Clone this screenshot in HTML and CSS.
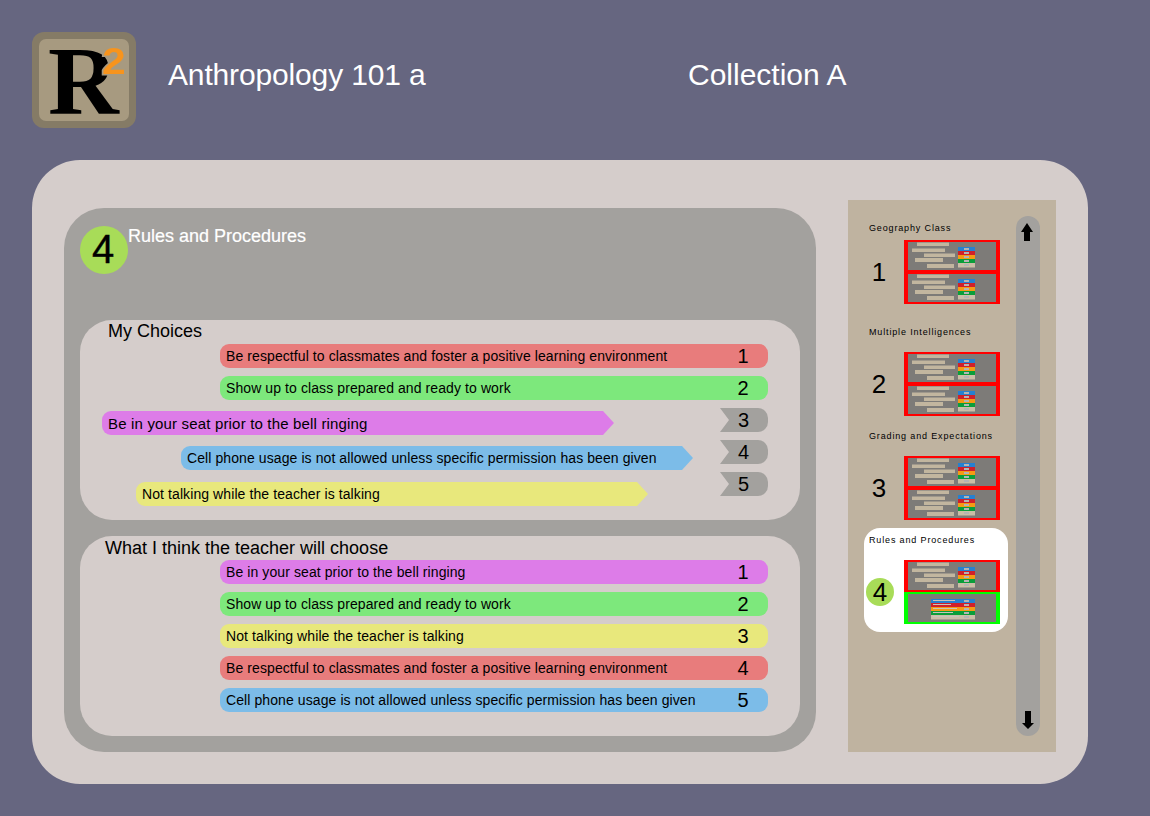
FILE: index.html
```html
<!DOCTYPE html>
<html lang="en">
<head>
<meta charset="utf-8">
<title>Anthropology 101 a</title>
<link rel="stylesheet" href="styles.css">
</head>
<body>
<svg class="defs" width="0" height="0" aria-hidden="true">
  <symbol id="scatter" viewBox="0 0 88 28">
    <g fill="#c2b69f">
      <rect x="9" y="0.5" width="32" height="3.5"/>
      <rect x="4" y="6.5" width="33" height="3.5"/>
      <rect x="16" y="11.5" width="31" height="3.5"/>
      <rect x="7" y="16" width="28" height="4"/>
      <rect x="19" y="22" width="27" height="4"/>
    </g>
    <rect x="50" y="5" width="17" height="4" fill="#2680d0"/>
    <rect x="50" y="9" width="17" height="4" fill="#d0202a"/>
    <rect x="50" y="13" width="17" height="4" fill="#f59a14"/>
    <rect x="50" y="17" width="17" height="4" fill="#0a9e3a"/>
    <rect x="50" y="21" width="17" height="4.5" fill="#cabea6"/>
    <g fill="#b4b4b4"><rect x="56" y="6" width="5" height="2"/><rect x="56" y="10" width="5" height="2"/><rect x="56" y="14" width="5" height="2"/><rect x="56" y="18" width="5" height="2"/><rect x="56" y="22" width="5" height="2"/></g>
  </symbol>
  <symbol id="stack" viewBox="0 0 88 28">
    <rect x="23" y="5" width="44" height="4" fill="#2680d0"/>
    <rect x="23" y="9" width="44" height="4" fill="#d0202a"/>
    <rect x="23" y="13" width="44" height="4" fill="#f59a14"/>
    <rect x="23" y="17" width="44" height="4" fill="#0a9e3a"/>
    <rect x="23" y="21" width="44" height="4.5" fill="#cabea6"/>
    <g fill="#b4b4b4"><rect x="56" y="6" width="5" height="2"/><rect x="56" y="10" width="5" height="2"/><rect x="56" y="14" width="5" height="2"/><rect x="56" y="18" width="5" height="2"/><rect x="56" y="22" width="5" height="2"/></g>
    <g fill="#c8c4bc"><rect x="25" y="6" width="22" height="1"/><rect x="25" y="10" width="18" height="1"/><rect x="25" y="14" width="24" height="1"/><rect x="25" y="18" width="20" height="1"/><rect x="25" y="22" width="26" height="1"/></g>
  </symbol>
</svg>

<header class="top">
  <div class="logo">
    <div class="logo-inner">
      <span class="logo-r">R</span>
      <span class="logo-sq">2</span>
    </div>
  </div>
  <h1 class="course">Anthropology 101 a</h1>
  <h1 class="collection">Collection A</h1>
</header>

<main class="stage">
  <section class="panel">
    <div class="panel-head">
      <span class="badge badge-lg">4</span>
      <h2 class="panel-title">Rules and Procedures</h2>
    </div>

    <div class="card">
      <h3 class="card-title mine">My Choices</h3>
      <div class="rows">
        <div class="row red"><span class="row-text">Be respectful to classmates and foster a positive learning environment</span><span class="num">1</span></div>
        <div class="row green"><span class="row-text">Show up to class prepared and ready to work</span><span class="num">2</span></div>
      </div>
      <div class="sorting">
        <div class="arrows">
          <div class="arrow purple off-a big">Be in your seat prior to the bell ringing</div>
          <div class="arrow blue off-b">Cell phone usage is not allowed unless specific permission has been given</div>
          <div class="arrow yellow off-c">Not talking while the teacher is talking</div>
        </div>
        <div class="tags">
          <div class="tag">3</div>
          <div class="tag">4</div>
          <div class="tag">5</div>
        </div>
      </div>
    </div>

    <div class="card">
      <h3 class="card-title theirs">What I think the teacher will choose</h3>
      <div class="rows">
        <div class="row purple"><span class="row-text">Be in your seat prior to the bell ringing</span><span class="num">1</span></div>
        <div class="row green"><span class="row-text">Show up to class prepared and ready to work</span><span class="num">2</span></div>
        <div class="row yellow"><span class="row-text">Not talking while the teacher is talking</span><span class="num">3</span></div>
        <div class="row red"><span class="row-text">Be respectful to classmates and foster a positive learning environment</span><span class="num">4</span></div>
        <div class="row blue"><span class="row-text">Cell phone usage is not allowed unless specific permission has been given</span><span class="num">5</span></div>
      </div>
    </div>
  </section>

  <aside class="side">
    <div class="groups">
      <div class="group first">
        <div class="group-title">Geography Class</div>
        <div class="group-body">
          <span class="group-num">1</span>
          <div class="thumbs">
            <div class="thumb"><svg class="thumb-art"><use href="#scatter"/></svg></div>
            <div class="thumb"><svg class="thumb-art"><use href="#scatter"/></svg></div>
          </div>
        </div>
      </div>
      <div class="group">
        <div class="group-title">Multiple Intelligences</div>
        <div class="group-body">
          <span class="group-num">2</span>
          <div class="thumbs">
            <div class="thumb"><svg class="thumb-art"><use href="#scatter"/></svg></div>
            <div class="thumb"><svg class="thumb-art"><use href="#scatter"/></svg></div>
          </div>
        </div>
      </div>
      <div class="group">
        <div class="group-title">Grading and Expectations</div>
        <div class="group-body">
          <span class="group-num">3</span>
          <div class="thumbs">
            <div class="thumb"><svg class="thumb-art"><use href="#scatter"/></svg></div>
            <div class="thumb"><svg class="thumb-art"><use href="#scatter"/></svg></div>
          </div>
        </div>
      </div>
      <div class="group current">
        <div class="group-title">Rules and Procedures</div>
        <div class="group-body">
          <span class="group-num badge badge-sm">4</span>
          <div class="thumbs">
            <div class="thumb"><svg class="thumb-art"><use href="#scatter"/></svg></div>
            <div class="thumb done"><svg class="thumb-art"><use href="#stack"/></svg></div>
          </div>
        </div>
      </div>
    </div>
    <div class="scroll">
      <svg class="scroll-arrow up" viewBox="0 0 14 18"><path d="M7 0 13 9H10V18H4V9H1Z"/></svg>
      <svg class="scroll-arrow" viewBox="0 0 14 18"><path d="M4 0H10V12H13L7 18 1 12H4Z"/></svg>
    </div>
  </aside>
</main>
</body>
</html>
```

FILE: styles.css
```css
* { box-sizing: border-box; }

html, body { margin: 0; padding: 0; }

body {
  width: 1150px;
  height: 816px;
  overflow: hidden;
  background: #666680;
  font-family: "Liberation Sans", Arial, sans-serif;
  color: #000;
}

h1, h2, h3 { margin: 0; font-weight: normal; }

.defs { display: block; height: 0; }

/* header */
.top {
  display: flex;
  align-items: center;
  height: 160px;
  padding: 0 32px;
}

.logo {
  width: 104px;
  height: 96px;
  padding: 7px;
  border-radius: 12px;
  background: #857b66;
  flex: none;
}

.logo-inner {
  position: relative;
  width: 100%;
  height: 100%;
  border-radius: 7px;
  background: #a79a80;
}

.logo-r {
  position: absolute;
  left: 9px;
  top: -8px;
  font-family: "Liberation Serif", serif;
  font-weight: bold;
  font-size: 98px;
  line-height: 100px;
}

.logo-sq {
  position: absolute;
  left: 63px;
  top: 3px;
  font-weight: bold;
  font-size: 37px;
  line-height: 40px;
  color: #f7941d;
  -webkit-text-stroke: 3px #a79a80;
  paint-order: stroke fill;
  transform: scaleX(1.15);
  transform-origin: left center;
}

.course, .collection {
  font-size: 30px;
  color: #fff;
  line-height: 36px;
  margin-top: -10px;
}

.course { width: 520px; margin-left: 32px; letter-spacing: -0.15px; }

/* main */
.stage {
  display: flex;
  gap: 32px;
  width: 1056px;
  height: 624px;
  margin-left: 32px;
  padding: 40px 32px 32px;
  border-radius: 48px;
  background: #d5cdcb;
}

.panel {
  display: flex;
  flex-direction: column;
  gap: 16px;
  width: 752px;
  margin-top: 8px;
  padding: 0 16px 16px;
  border-radius: 40px;
  background: #a3a19e;
}

.panel-head {
  display: flex;
  align-items: flex-start;
  height: 96px;
  padding-top: 18px;
}

.badge {
  display: flex;
  align-items: center;
  justify-content: center;
  border-radius: 50%;
  background: #a8dc58;
  flex: none;
}

.badge-lg {
  width: 48px;
  height: 48px;
  padding: 0 2px 2px 0;
  font-size: 40px;
  -webkit-text-stroke: 0.4px #000;
}

.panel-title {
  font-size: 18px;
  line-height: 20px;
  color: #fff;
  -webkit-text-stroke: 0.2px #fff;
}

.card {
  height: 200px;
  border-radius: 32px;
  background: #d5cdcb;
}

.card-title {
  height: 24px;
  font-size: 18px;
  line-height: 22px;
}

.mine { padding-left: 28px; }
.theirs { padding-left: 25px; line-height: 24px; }

.rows {
  display: flex;
  flex-direction: column;
  gap: 8px;
  margin: 0 32px 0 140px;
}

.row {
  display: flex;
  align-items: center;
  justify-content: space-between;
  height: 24px;
  padding-left: 6px;
  border-radius: 9px;
  font-size: 14px;
  letter-spacing: 0.09px;
}

.num {
  width: 50px;
  text-align: center;
  font-size: 20px;
}

.red { background: #e87c7c; }
.green { background: #7de87c; }
.purple { background: #dd7ce8; }
.blue { background: #7cbce8; }
.yellow { background: #e8e87c; }

.sorting {
  display: flex;
  justify-content: space-between;
  padding-right: 32px;
  margin-top: 8px;
}

.arrows {
  display: flex;
  flex-direction: column;
  padding-top: 3px;
}

.arrow {
  width: 512px;
  height: 24px;
  padding-left: 6px;
  font-size: 14px;
  line-height: 24px;
  letter-spacing: 0.09px;
  clip-path: polygon(0 0, calc(100% - 11px) 0, 100% 50%, calc(100% - 11px) 100%, 0 100%);
  border-radius: 9px 0 0 9px;
}

.big { font-size: 15px; line-height: 26px; letter-spacing: 0.17px; }

.off-a { margin-left: 22px; }
.off-b { margin-left: 101px; margin-top: 11px; }
.off-c { margin-left: 56px; margin-top: 12px; }

.tags {
  display: flex;
  flex-direction: column;
  gap: 8px;
}

.tag {
  width: 48px;
  height: 24px;
  padding-right: 1px;
  border-radius: 0 10px 10px 0;
  background: #a3a19e;
  clip-path: polygon(0 0, 100% 0, 100% 100%, 0 100%, 9px 50%);
  font-size: 20px;
  line-height: 24px;
  text-align: center;
}

/* sidebar */
.side {
  display: flex;
  gap: 8px;
  width: 208px;
  padding: 16px;
  background: #bfb3a0;
}

.groups {
  display: flex;
  flex-direction: column;
  width: 144px;
}

.group {
  height: 104px;
  padding-top: 6px;
}

.group-title {
  height: 26px;
  padding-left: 5px;
  font-size: 9px;
  line-height: 12px;
  letter-spacing: 0.85px;
}

.first .group-title { height: 18px; }

.group-body {
  display: flex;
  align-items: center;
}

.group-num {
  width: 30px;
  margin-right: 10px;
  text-align: center;
  font-size: 26px;
  flex: none;
}

.badge-sm {
  width: 28px;
  height: 28px;
  margin: 0 10px 0 2px;
}

.thumbs { display: flex; flex-direction: column; }

.current {
  border-radius: 16px;
  background: #fff;
}

.thumb {
  width: 96px;
  height: 32px;
  border: solid #ff0000;
  border-width: 2px 4px;
  background: #7d7b78;
  overflow: hidden;
}

.thumb.done { border-color: #00ff00; }

.thumb-art {
  display: block;
  width: 88px;
  height: 28px;
  filter: blur(0.3px);
}

.scroll {
  display: flex;
  flex-direction: column;
  align-items: center;
  justify-content: space-between;
  width: 24px;
  padding: 7px 0;
  border-radius: 12px;
  background: #a3a19e;
}

.scroll-arrow {
  display: block;
  width: 14px;
  height: 18px;
}

.up { margin-left: -2px; }
```
